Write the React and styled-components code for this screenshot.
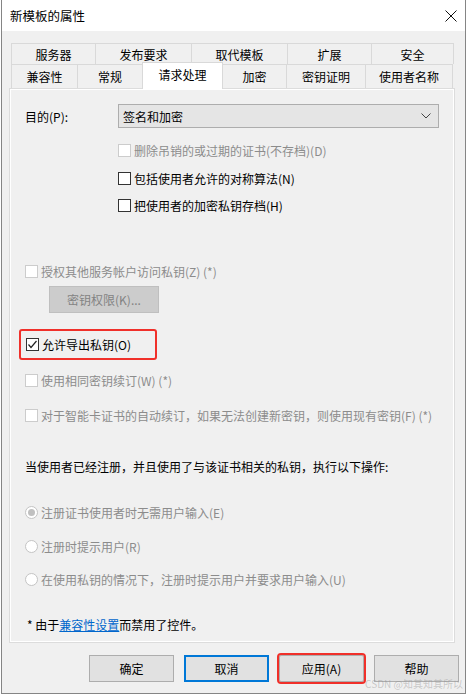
import React from "react";
import styled, { createGlobalStyle } from "styled-components";

const GlobalStyle = createGlobalStyle`
  html, body {
    margin: 0;
    padding: 0;
    background: #ffffff;
  }
  body {
    font-family: "Noto Sans CJK SC", "Noto Sans", sans-serif;
    font-size: 12px;
    color: #000;
  }
`;

const Window = styled.div`
  position: relative;
  box-sizing: border-box;
  margin-left: 1px;
  width: 465px;
  height: 694px;
  border: 1px solid #858585;
  border-top: none;
  background: #f0f0f0;
  display: flex;
  flex-direction: column;
`;

const TitleBar = styled.div`
  height: 31px;
  background: #ffffff;
  display: flex;
  align-items: center;
  justify-content: space-between;
  padding: 0 7px 0 8px;
  font-size: 12.5px;
`;

const CloseButton = styled.div`
  width: 14px;
  height: 14px;
  display: flex;
  align-items: center;
  justify-content: center;
  margin-top: 1px;
`;

const Body = styled.div`
  flex: 1;
  padding: 12px 8px 0 7px;
  display: flex;
  flex-direction: column;
`;

const TabRow = styled.div`
  display: flex;
  height: ${(p) => p.$h}px;
  padding-left: 2px;
`;

const Tab = styled.div`
  box-sizing: border-box;
  width: ${(p) => p.$w}px;
  height: ${(p) => (p.$active ? 27 : p.$h)}px;
  margin-right: -1px;
  margin-top: ${(p) => (p.$active ? -2 : 0)}px;
  border: 1px solid #d9d9d9;
  border-bottom: none;
  background: ${(p) => (p.$active ? "#ffffff" : "#f0f0f0")};
  display: flex;
  align-items: center;
  justify-content: center;
  padding-bottom: ${(p) => (p.$active ? 4 : 0)}px;
  position: relative;
  z-index: ${(p) => (p.$active ? 2 : 1)};
  white-space: nowrap;
`;

const Panel = styled.div`
  box-sizing: border-box;
  width: 446px;
  height: 555px;
  border: 1px solid #dcdcdc;
  box-shadow: inset 0 0 0 1px #ffffff;
  padding: 15px 0 0 15px;
  display: flex;
  flex-direction: column;
`;

const Row = styled.div`
  display: flex;
  align-items: center;
  height: 20px;
  margin-top: ${(p) => p.$gap || 0}px;
  margin-left: ${(p) => p.$indent || 0}px;
  color: ${(p) => (p.$disabled ? "#8c8c8c" : "#000")};
  white-space: nowrap;
`;

const SelectRow = styled.div`
  display: flex;
  align-items: center;
  height: 24px;
`;

const FieldLabel = styled.span`
  width: 93px;
`;

const Select = styled.div`
  box-sizing: border-box;
  width: 321px;
  height: 24px;
  background: #e5e5e5;
  border: 1px solid #adadad;
  display: flex;
  align-items: center;
  justify-content: space-between;
  padding: 0 7px 0 4px;
`;

const Box = styled.span`
  box-sizing: border-box;
  width: 13px;
  height: 13px;
  margin-right: 3px;
  border: 1px solid ${(p) => (p.$disabled ? "#cccccc" : "#333333")};
  background: #ffffff;
  display: inline-flex;
  align-items: center;
  justify-content: center;
  flex-shrink: 0;
`;

const Radio = styled.span`
  box-sizing: border-box;
  width: 13px;
  height: 13px;
  margin-right: 3px;
  border-radius: 50%;
  border: 1px solid #c4c4c4;
  background: #ffffff;
  display: inline-flex;
  align-items: center;
  justify-content: center;
  flex-shrink: 0;
  &::after {
    content: "";
    width: 7px;
    height: 7px;
    border-radius: 50%;
    background: ${(p) => (p.$checked ? "#c0c0c0" : "transparent")};
  }
`;

const DisabledButton = styled.div`
  box-sizing: border-box;
  width: 110px;
  height: 27px;
  margin: 5px 0 0 24px;
  background: #cccccc;
  border: 1px solid #bfbfbf;
  color: #838383;
  display: flex;
  align-items: center;
  justify-content: center;
`;

const Highlight = styled.div`
  box-sizing: border-box;
  width: 138px;
  height: 31px;
  margin: 16px 0 0 -6px;
  padding-left: 5px;
  border: 2px solid #f0302a;
  border-radius: 3px;
  display: flex;
  align-items: center;
`;

const Note = styled.div`
  margin-top: ${(p) => p.$gap}px;
  margin-left: 2px;
  height: 20px;
  display: flex;
  align-items: center;
`;

const Link = styled.a`
  color: #0066cc;
  text-decoration: underline;
`;

const ButtonBar = styled.div`
  display: flex;
  justify-content: flex-end;
  gap: 10px;
  margin: 12px -2px 0 0;
`;

const Button = styled.div`
  box-sizing: border-box;
  width: 85px;
  height: 27px;
  background: #e1e1e1;
  border: ${(p) => (p.$focus ? "2px solid #0078d7" : "1px solid #adadad")};
  display: flex;
  align-items: center;
  justify-content: center;
  line-height: 1;
  outline: ${(p) => (p.$marked ? "2px solid #f0302a" : "none")};
  outline-offset: 0px;
  border-radius: ${(p) => (p.$marked ? 2 : 0)}px;
`;

const Watermark = styled.span`
  position: absolute;
  right: 2px;
  bottom: 4px;
  font-size: 10px;
  line-height: 1;
  color: rgba(150, 150, 150, 0.45);
  white-space: nowrap;
`;

const CheckMark = () => (
  <svg width="11" height="11" viewBox="0 0 11 11">
    <polyline points="1.5,5.5 4,8.5 9.5,2" fill="none" stroke="#222" strokeWidth="1.2" />
  </svg>
);

const Check = ({ label, disabled, checked, gap, indent }) => (
  <Row $gap={gap} $indent={indent} $disabled={disabled}>
    <Box $disabled={disabled}>{checked && <CheckMark />}</Box>
    {label}
  </Row>
);

const RadioItem = ({ label, checked, gap }) => (
  <Row $gap={gap} $disabled>
    <Radio $checked={checked} />
    {label}
  </Row>
);

const topTabs = [
  ["服务器", 85],
  ["发布要求", 97],
  ["取代模板", 97],
  ["扩展", 85],
  ["安全", 83],
];

const bottomTabs = [
  ["兼容性", 67],
  ["常规", 66],
  ["请求处理", 81, true],
  ["加密", 65],
  ["密钥证明", 80],
  ["使用者名称", 88],
];

export default function App() {
  return (
    <>
      <GlobalStyle />
      <Window>
        <TitleBar>
          <span>新模板的属性</span>
          <CloseButton>
            <svg width="12" height="12" viewBox="0 0 12 12">
              <path d="M0.5 0.5 L11.5 11.5 M11.5 0.5 L0.5 11.5" stroke="#111" strokeWidth="1" />
            </svg>
          </CloseButton>
        </TitleBar>
        <Body>
          <TabRow $h={21}>
            {topTabs.map(([t, w]) => (
              <Tab key={t} $w={w} $h={21}>
                {t}
              </Tab>
            ))}
          </TabRow>
          <TabRow $h={24}>
            {bottomTabs.map(([t, w, a]) => (
              <Tab key={t} $w={w} $h={24} $active={a}>
                {t}
              </Tab>
            ))}
          </TabRow>
          <Panel>
            <SelectRow>
              <FieldLabel>目的(P):</FieldLabel>
              <Select>
                <span>签名和加密</span>
                <svg width="10" height="6" viewBox="0 0 10 6">
                  <polyline points="0.5,0.5 5,5 9.5,0.5" fill="none" stroke="#444" strokeWidth="1" />
                </svg>
              </Select>
            </SelectRow>
            <Check gap={12} indent={93} disabled label="删除吊销的或过期的证书(不存档)(D)" />
            <Check gap={8} indent={93} label="包括使用者允许的对称算法(N)" />
            <Check gap={7} indent={93} label="把使用者的加密私钥存档(H)" />
            <Check gap={46} disabled label="授权其他服务帐户访问私钥(Z) (*)" />
            <DisabledButton>密钥权限(K)...</DisabledButton>
            <Highlight>
              <Row>
                <Box>
                  <CheckMark />
                </Box>
                允许导出私钥(O)
              </Row>
            </Highlight>
            <Check gap={10} disabled label="使用相同密钥续订(W) (*)" />
            <Check
              gap={15}
              disabled
              label="对于智能卡证书的自动续订，如果无法创建新密钥，则使用现有密钥(F) (*)"
            />
            <Row $gap={31}>当使用者已经注册，并且使用了与该证书相关的私钥，执行以下操作:</Row>
            <RadioItem gap={26} checked label="注册证书使用者时无需用户输入(E)" />
            <RadioItem gap={14} label="注册时提示用户(R)" />
            <RadioItem gap={13} label="在使用私钥的情况下，注册时提示用户并要求用户输入(U)" />
            <Note $gap={25}>
              *&nbsp;由于<Link>兼容性设置</Link>而禁用了控件。
            </Note>
          </Panel>
          <ButtonBar>
            <Button>确定</Button>
            <Button $focus>取消</Button>
            <Button $marked>应用(A)</Button>
            <Button>帮助</Button>
          </ButtonBar>
        </Body>
        <Watermark>CSDN @知其知其所以</Watermark>
      </Window>
    </>
  );
}
